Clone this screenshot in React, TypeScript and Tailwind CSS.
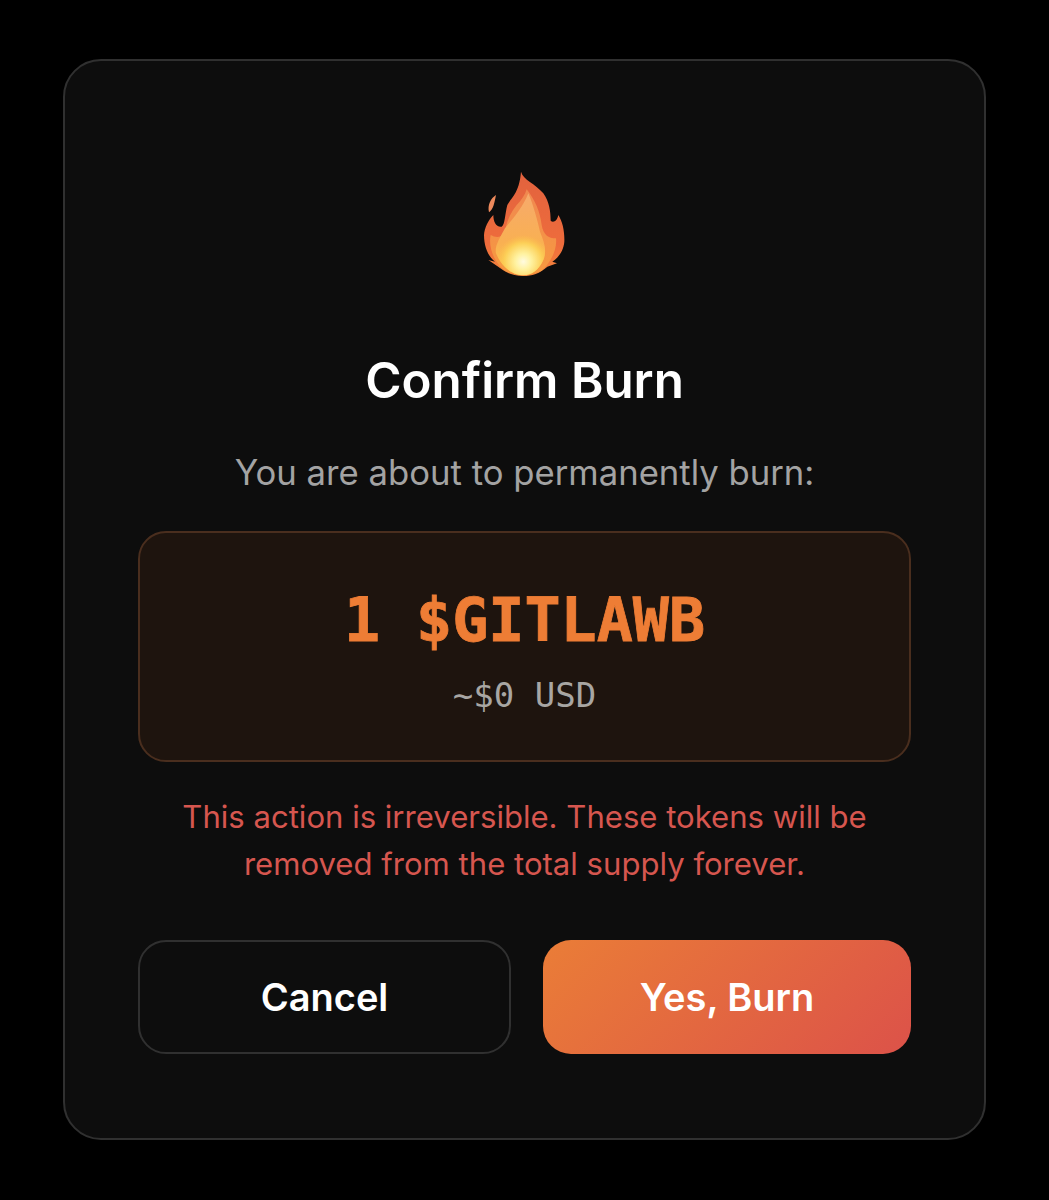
function Flame() {
  return (
    <svg width="90" height="110" viewBox="60 60 270 330" className="block blur-[0.5px]">
      <defs>
        <linearGradient id="outer" x1="0" y1="0" x2="0" y2="1">
          <stop offset="0" stopColor="#e2623e" />
          <stop offset="0.7" stopColor="#ee6c3c" />
          <stop offset="1" stopColor="#f4883c" />
        </linearGradient>
        <linearGradient id="mid" x1="0" y1="0" x2="0" y2="1">
          <stop offset="0" stopColor="#f08850" />
          <stop offset="1" stopColor="#f79a40" />
        </linearGradient>
        <linearGradient id="inner" x1="0" y1="0" x2="0" y2="1">
          <stop offset="0" stopColor="#f6aa6c" />
          <stop offset="0.6" stopColor="#f9b052" />
          <stop offset="1" stopColor="#fcc84c" />
        </linearGradient>
        <radialGradient id="core" gradientUnits="userSpaceOnUse" cx="190" cy="335" r="80">
          <stop offset="0" stopColor="#fffbe0" />
          <stop offset="0.3" stopColor="#fff2a0" />
          <stop offset="0.7" stopColor="#fcd058" />
          <stop offset="1" stopColor="#fbc04c" stopOpacity="0" />
        </radialGradient>
        <clipPath id="flame-inner">
          <path d="M205 130C220 165 232 210 240 245C252 275 262 300 250 330C238 358 215 376 190 376C158 376 125 352 108 310C103 290 120 262 135 235C160 205 190 170 205 130Z" />
        </clipPath>
      </defs>
      <path d="M108 135C92 145 82 165 87 187C100 178 103 160 108 135Z" fill="#ee8a5c" />
      <path
        d="M183 65C190 90 225 100 250 130C268 155 272 185 272 212C280 220 292 212 295 195C308 215 314 245 313 275C311 300 297 322 277 335L291 340L262 350C240 370 215 378 190 378C165 378 140 370 120 354L85 330L105 335C85 320 72 290 72 255C73 235 85 210 100 195C100 215 108 232 125 230C135 225 135 190 142 165C152 145 178 130 183 65Z"
        fill="url(#outer)"
      />
      <path
        d="M200 118C225 150 240 185 245 225C250 255 265 265 288 265C292 300 270 340 245 362C215 378 165 378 135 362C100 335 85 290 92 255C110 265 125 262 135 245C140 215 150 190 170 165C185 150 195 135 200 118Z"
        fill="url(#mid)"
      />
      <path
        d="M205 130C220 165 232 210 240 245C252 275 262 300 250 330C238 358 215 376 190 376C158 376 125 352 108 310C103 290 120 262 135 235C160 205 190 170 205 130Z"
        fill="url(#inner)"
      />
      <g clipPath="url(#flame-inner)">
        <circle cx="190" cy="335" r="80" fill="url(#core)" />
      </g>
    </svg>
  );
}

export default function App() {
  return (
    <div className="min-h-[1200px] w-[1049px] bg-black pt-[59px] font-['Inter',sans-serif]">
      <div className="ml-[63px] flex h-[1081px] w-[923px] flex-col items-center rounded-[38px] border-2 border-[#303030] bg-[#0d0d0d] px-[73px] pt-[109px]">
        <Flame />

        <h1 className="mt-[72px] text-[49.3px] leading-[56px] font-semibold text-white">Confirm Burn</h1>
        <p className="mt-[41px] text-[34.7px] leading-[46px] text-[#a3a3a3]">You are about to permanently burn:</p>

        {/* amount box */}
        <div className="mt-[36px] flex h-[231px] w-full flex-col items-center rounded-[28px] border-2 border-[#4a2e1e] bg-[#1e140e] pt-[52px]">
          <div className="font-['DejaVu_Sans_Mono',monospace] text-[60px] leading-[70px] font-bold text-[#ee7d35] [-webkit-text-stroke:0.8px_#ee7d35]">
            1 $GITLAWB
          </div>
          <div className="mt-[20px] font-['DejaVu_Sans_Mono',monospace] text-[34px] leading-[40px] text-[#a8a6a3]">
            ~$0 USD
          </div>
        </div>

        <p className="mt-[32px] text-center text-[31.1px] leading-[47px] text-[#d6564f]">
          This action is irreversible. These tokens will be
          <br />
          removed from the total supply forever.
        </p>

        <div className="mt-[52px] flex w-full gap-[32px]">
          <button className="h-[114px] w-[373px] rounded-[28px] border-2 border-[#303030] bg-transparent text-[38px] font-semibold text-white">
            Cancel
          </button>
          <button className="h-[114px] w-[368px] rounded-[28px] bg-[linear-gradient(135deg,#ea7d37,#dc5249)] text-[38px] font-semibold text-white">
            Yes, Burn
          </button>
        </div>
      </div>
    </div>
  );
}
